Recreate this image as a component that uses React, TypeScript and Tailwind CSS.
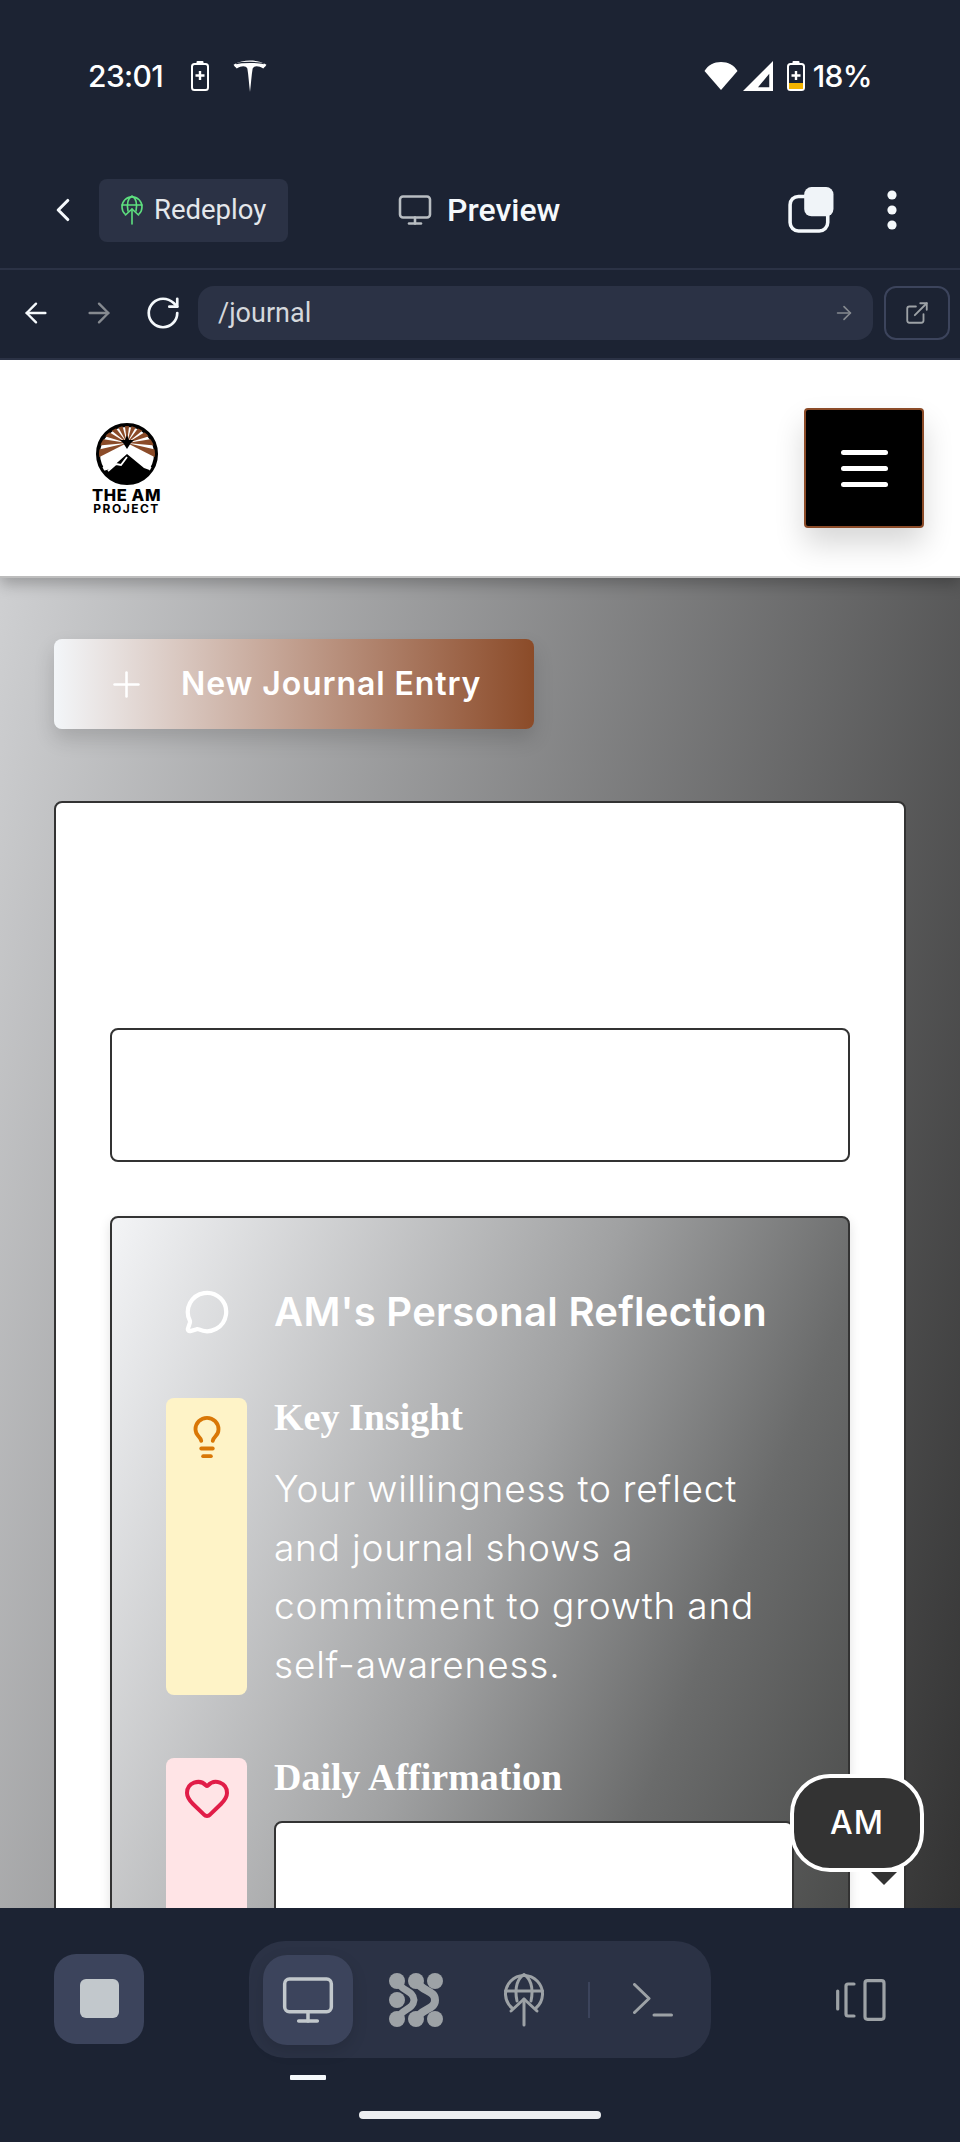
import { ArrowLeft, ArrowRight, ChevronLeft, ExternalLink, Heart, Lightbulb, MessageCircle, Monitor, Plus, RotateCw } from "lucide-react";

function TeslaIcon() {
  return (
    <svg width="34" height="32" viewBox="0 0 32 30">
      <path d="M16 30 C15 22 14.6 14 13.5 8 C12 5 8 5 3.5 8 C2 6.5 1 5.5 0.5 4.5 C5 1.5 11 0.5 16 0.5 C21 0.5 27 1.5 31.5 4.5 C31 5.5 30 6.5 28.5 8 C24 5 20 5 18.5 8 C17.4 14 17 22 16 30Z" fill="#fff" />
      <path d="M3 3.4 C8 1.8 24 1.8 29 3.4" stroke="#1c2333" strokeWidth="1" fill="none" />
    </svg>
  );
}

function BatteryCharge({ low }: { low?: boolean }) {
  return (
    <svg width="18" height="30" viewBox="0 0 18 30">
      <rect x="5.5" y="0" width="7" height="4" rx="1" fill="#fff" />
      <rect x="1" y="3" width="16" height="26" rx="2.5" fill="none" stroke="#fff" strokeWidth="2" />
      <path d="M9 10v9M4.5 14.5h9" stroke="#fff" strokeWidth="2.4" />
      {low ? <rect x="2" y="22" width="14" height="6" fill="#f5b400" /> : null}
    </svg>
  );
}

function ReplitDots() {
  return (
    <svg width="54" height="54" viewBox="0 0 54 54" fill="#9da2a6">
      <circle cx="8" cy="8" r="8" />
      <circle cx="27" cy="8" r="8" />
      <circle cx="46" cy="8" r="8" />
      <circle cx="8" cy="27" r="8" />
      <circle cx="8" cy="46" r="8" />
      <circle cx="27" cy="46" r="8" />
      <circle cx="46" cy="46" r="8" />
      <path d="M8 8 C13 19 24 17 25 27 C24 37 13 35 8 46" fill="none" stroke="#9da2a6" strokeWidth="7" strokeLinecap="round" />
      <path d="M27 8 C33 19 46 17 46 27 C46 37 33 35 27 46" fill="none" stroke="#9da2a6" strokeWidth="8" strokeLinecap="round" />
    </svg>
  );
}

function GlobeUp() {
  return (
    <svg width="40" height="54" viewBox="0 0 40 54" fill="none" stroke="#9da2a6" strokeWidth="3" strokeLinecap="round" strokeLinejoin="round">
      <path d="M8 35 A18.5 18.5 0 1 1 32 35" />
      <path d="M1.5 18h37" />
      <path d="M13 28 C10 14 14 5 20 1.5 C26 5 30 14 27 28" />
      <path d="M7 38 L20 26 L33 38" />
      <path d="M20 26 V52" />
    </svg>
  );
}

function Logo() {
  const rays = [-110, -88, -66, -44, -22, 0, 22, 44, 66, 88, 110];
  return (
    <div className="flex flex-col items-center">
      <svg width="62" height="62" viewBox="0 0 62 62">
        <defs>
          <clipPath id="logo-clip">
            <circle cx="31" cy="31" r="28" />
          </clipPath>
        </defs>
        <circle cx="31" cy="31" r="29" fill="#fff" stroke="#000" strokeWidth="4" />
        <g clipPath="url(#logo-clip)">
          {rays.map((r) => (
            <path key={r} d="M31 20 L27 -12 L35 -12 Z" fill="#8b4b28" transform={`rotate(${r} 31 20)`} />
          ))}
          <path d="M31 23 L60 48 L2 48 Z" fill="#fff" />
          <path d="M31 31 L48 45 L62 50 L62 62 L0 62 L0 50 L14 46 Z" fill="#000" />
          <path d="M12 48 L20 41 L25 42 L31 34" fill="none" stroke="#fff" strokeWidth="1.8" />
        </g>
        <path d="M31 12 L33 17 L38 17 L34.5 20.5 L31 26 L27.5 20.5 L24 17 L29 17 Z" fill="#000" />
      </svg>
      <div className="mt-[2px] font-['Inter',sans-serif] font-extrabold text-[16.5px] leading-[16px] text-black tracking-[0.6px] whitespace-nowrap">THE AM</div>
      <div className="font-['Inter',sans-serif] font-bold text-[12px] leading-[11px] text-black tracking-[1.5px] whitespace-nowrap">PROJECT</div>
    </div>
  );
}

function GlobeGreen() {
  return (
    <svg width="22" height="30" viewBox="0 0 22 30" fill="none" stroke="#5ee07f" strokeWidth="1.6" strokeLinecap="round" strokeLinejoin="round">
      <path d="M4 19 A10 10 0 1 1 18 19" />
      <path d="M1 10h20" />
      <path d="M7 16 C5.5 8 7.5 3 11 1 C14.5 3 16.5 8 15 16" />
      <path d="M4.5 20 L11 14 L17.5 20" />
      <path d="M11 14 V29" />
    </svg>
  );
}

export default function App() {
  return (
    <div className="relative w-[960px] h-[2142px] flex flex-col overflow-hidden bg-[#1c2333] font-['Roboto',sans-serif]">
      {/* status bar */}
      <div className="h-[152px] shrink-0 flex items-center pl-[88px] pr-[88px] text-white">
        <span className="font-['Inter',sans-serif] font-medium text-[30px] leading-none tracking-[-0.6px] w-[100px]">23:01</span>
        <span className="ml-[3px]"><BatteryCharge /></span>
        <span className="ml-[24px]"><TeslaIcon /></span>
        <div className="flex-1" />
        <svg width="36" height="28" viewBox="0 0 34 28"><path d="M17 28 L0.5 9 C4 3 10 0 17 0 C24 0 30 3 33.5 9Z" fill="#fff" /></svg>
        <svg width="30" height="30" viewBox="0 0 28 28" className="ml-[4px]"><path d="M28 0V28H0ZM24.5 12 L14 24.5H24.5Z" fill="#fff" fillRule="evenodd" /></svg>
        <span className="ml-[14px]"><BatteryCharge low /></span>
        <span className="ml-[8px] font-['Inter',sans-serif] font-medium text-[30px] leading-none tracking-[-0.6px]">18%</span>
      </div>

      {/* title row */}
      <div className="h-[118px] shrink-0 flex items-center border-b-2 border-[#2b3245] pl-[44px]">
        <ChevronLeft size={38} color="#f5f9fc" strokeWidth={2} />
        <div className="ml-[17px] w-[189px] h-[63px] rounded-[8px] bg-[#2b3245] flex items-center pl-[22px]">
          <GlobeGreen />
          <span className="ml-[11px] text-[27.5px] text-[#e4e7eb] leading-none">Redeploy</span>
        </div>
        <Monitor size={36} color="#b8bdc2" strokeWidth={1.7} className="ml-[109px]" />
        <span className="ml-[14px] text-[32px] font-medium text-[#f5f9fc] leading-none">Preview</span>
        <svg width="46" height="46" viewBox="0 0 44 44" className="ml-[228px]">
          <rect x="2" y="9" width="36" height="33" rx="8" fill="none" stroke="#f5f9fc" strokeWidth="3.4" />
          <rect x="15.5" y="0" width="28" height="28" rx="7" fill="#f0f4f8" />
        </svg>
        <svg width="12" height="42" viewBox="0 0 12 42" className="ml-[52px]" fill="#f5f9fc">
          <circle cx="6" cy="6" r="4.6" /><circle cx="6" cy="21" r="4.6" /><circle cx="6" cy="36" r="4.6" />
        </svg>
      </div>

      {/* url row */}
      <div className="h-[90px] shrink-0 flex items-center border-b-2 border-[#2b3245] pl-[20px] pb-[2px]">
        <ArrowLeft size={32} color="#f5f9fc" strokeWidth={1.8} />
        <ArrowRight size={32} color="#868a90" strokeWidth={1.8} className="ml-[31px]" />
        <RotateCw size={38} color="#f5f9fc" strokeWidth={1.7} className="ml-[29px]" />
        <div className="ml-[16px] w-[675px] h-[54px] rounded-[16px] bg-[#2b3245] flex items-center pl-[20px] pr-[18px]">
          <span className="flex-1 text-[27px] text-[#d5d8dc] leading-none">/journal</span>
          <ArrowRight size={22} color="#868a90" strokeWidth={1.8} />
        </div>
        <div className="ml-[11px] w-[66px] h-[54px] rounded-[12px] border-2 border-[#3c445c] flex items-center justify-center">
          <ExternalLink size={26} color="#9da2a6" strokeWidth={1.7} />
        </div>
      </div>

      {/* web view */}
      <div className="flex-1 min-h-0 flex flex-col overflow-hidden bg-white">
        <div className="relative z-10 h-[218px] shrink-0 bg-white flex items-center justify-between pl-[92px] pr-[36px] border-b-2 border-[#bdbdbd] shadow-[0_6px_14px_rgba(0,0,0,0.25)]">
          <div className="mt-[1px]"><Logo /></div>
          <div className="w-[120px] h-[120px] bg-black border-2 border-[#8b4b28] rounded-[4px] flex flex-col items-center justify-center gap-[11px] shadow-[0_16px_30px_rgba(0,0,0,0.16)]">
            <span className="block w-[47px] h-[5px] rounded-full bg-white" />
            <span className="block w-[47px] h-[5px] rounded-full bg-white" />
            <span className="block w-[47px] h-[5px] rounded-full bg-white" />
          </div>
        </div>

        <div className="flex-1 min-h-0 overflow-hidden pt-[61px] pl-[54px] bg-[linear-gradient(103deg,#cfd0d2_0%,#333333_100%)]">
          <div className="w-[480px] h-[90px] rounded-[8px] flex items-center pl-[52px] bg-gradient-to-r from-[#f3f6f9] to-[#8b4b28] shadow-[0_10px_20px_rgba(0,0,0,0.15)]">
            <Plus size={41} color="#fff" strokeWidth={1.5} />
            <span className="ml-[34px] font-['Inter',sans-serif] font-semibold text-[32px] tracking-[0.9px] leading-none text-white whitespace-nowrap">New Journal Entry</span>
          </div>

          <div className="mt-[72px] w-[852px] bg-white border-2 border-[#333333] rounded-[8px] pt-[225px] px-[54px] h-[1200px]">
            <div className="h-[134px] bg-white border-2 border-[#333333] rounded-[8px]" />

            <div className="mt-[54px] h-[720px] border-2 border-[#333333] rounded-[8px] pt-[70px] px-[54px] bg-[linear-gradient(112deg,#f3f4f6_0%,#a0a1a2_50%,#6a6b6b_75%,#4a4b4a_100%)] shadow-[0_4px_12px_rgba(0,0,0,0.12)]">
              <div className="flex items-center">
                <div className="w-[81px] flex justify-center">
                  <MessageCircle size={46} color="#fff" strokeWidth={2.2} />
                </div>
                <h2 className="ml-[27px] font-['Inter',sans-serif] font-semibold text-[40px] tracking-[0.3px] leading-[48px] text-white whitespace-nowrap">AM's Personal Reflection</h2>
              </div>

              <div className="mt-[62px] flex">
                <div className="w-[81px] shrink-0 rounded-[8px] bg-[#fef3c7] flex justify-center pt-[16px]">
                  <Lightbulb size={46} color="#d97706" strokeWidth={2} />
                </div>
                <div className="ml-[27px]">
                  <h3 className="h-[62px] font-['Liberation_Serif',serif] font-bold text-[38px] leading-[38px] text-white">Key Insight</h3>
                  <p className="font-['Inter',sans-serif] font-light text-[37px] tracking-[0.8px] leading-[58.7px] text-white">
                    Your willingness to reflect and journal shows a commitment to growth and self-awareness.
                  </p>
                </div>
              </div>

              <div className="mt-[63px] flex">
                <div className="w-[81px] shrink-0 rounded-[8px] bg-[#ffe4e6] flex justify-center pt-[16px] h-[400px]">
                  <Heart size={48} color="#e11d48" strokeWidth={2} />
                </div>
                <div className="ml-[27px] flex-1">
                  <h3 className="h-[63px] font-['Liberation_Serif',serif] font-bold text-[38px] leading-[38px] text-white">Daily Affirmation</h3>
                  <div className="h-[200px] bg-white border-2 border-[#333333] rounded-[8px]" />
                </div>
              </div>
            </div>
          </div>
        </div>
      </div>

      {/* bottom bar */}
      <div className="relative h-[234px] shrink-0 bg-[#1c2333] flex flex-col">
        <div className="mt-[33px] h-[117px] flex items-center pl-[54px]">
          <div className="w-[90px] h-[90px] mt-[-2px] rounded-[22px] bg-[#3c445c] flex items-center justify-center">
            <div className="w-[39px] h-[39px] rounded-[6px] bg-[#c2c8cc]" />
          </div>
          <div className="ml-[105px] w-[462px] h-[117px] rounded-[36px] bg-[#2b3245] flex items-center pl-[14px]">
            <div className="w-[90px] h-[90px] rounded-[24px] bg-[#3c445c] flex items-center justify-center shadow-[0_6px_16px_rgba(0,0,0,0.12)]">
              <Monitor size={56} color="#c2c8cc" strokeWidth={1.5} />
            </div>
            <span className="ml-[36px]"><ReplitDots /></span>
            <span className="ml-[61px]"><GlobeUp /></span>
            <span className="ml-[44px] w-[2px] h-[36px] bg-[#3c445c]" />
            <svg width="40" height="34" viewBox="0 0 40 34" className="ml-[43px]" fill="none" stroke="#9da2a6" strokeWidth="3" strokeLinecap="round" strokeLinejoin="round">
              <path d="M1.5 1.5 L16 15.5 L1.5 29.5" />
              <path d="M21 32 H38.5" />
            </svg>
          </div>
          <svg width="50" height="42" viewBox="0 0 50 42" className="ml-[125px]" fill="none" stroke="#9da2a6" strokeWidth="3.2" strokeLinecap="round" strokeLinejoin="round">
            <path d="M1.7 12 V30" />
            <path d="M18 5 H12 A2 2 0 0 0 10 7 V35 A2 2 0 0 0 12 37 H18" />
            <rect x="29" y="1.7" width="19" height="38.6" rx="2.5" />
          </svg>
        </div>
        <div className="ml-[290px] mt-[17px] w-[36px] h-[5px] bg-[#f5f9fc] rounded-[1px]" />
        <div className="mx-auto mt-[31px] w-[242px] h-[8px] rounded-full bg-[#eceef1]" />
      </div>

      {/* floating AM bubble */}
      <div className="absolute left-[790px] top-[1774px] w-[134px] h-[98px] rounded-[40px] border-4 border-white bg-[#333333] flex items-center justify-center font-['Inter',sans-serif] font-medium text-[32px] tracking-[1px] text-white">AM</div>
      <div className="absolute left-[871px] top-[1872px] w-0 h-0 border-l-[13px] border-r-[13px] border-t-[13px] border-l-transparent border-r-transparent border-t-[#333333]" />
    </div>
  );
}
